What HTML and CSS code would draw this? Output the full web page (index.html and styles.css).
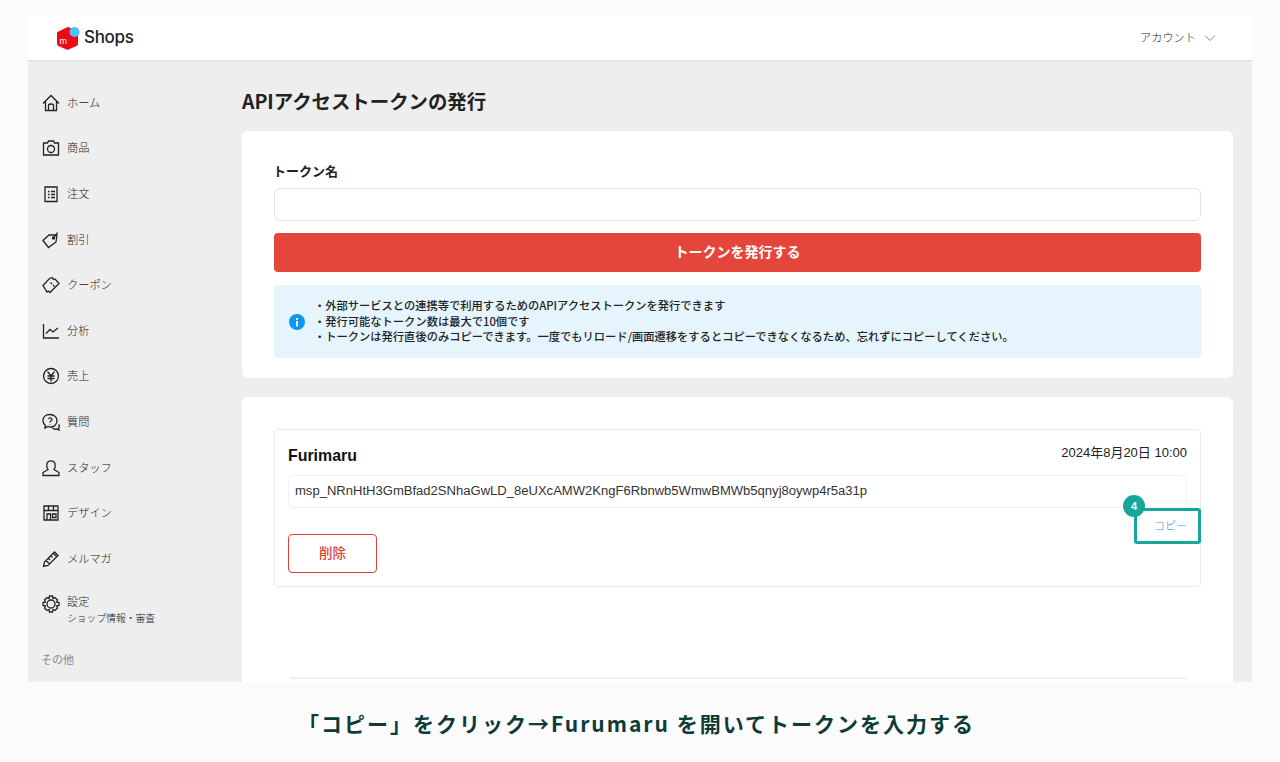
FILE: index.html
```html
<!DOCTYPE html>
<html lang="ja">
<head>
<meta charset="utf-8">
<title>APIアクセストークンの発行</title>
<link rel="stylesheet" href="styles.css">
</head>
<body>
<div class="shot">
  <header class="top">
    <div class="brand">
      <svg class="logo" width="24" height="24" viewBox="0 0 24 24"><path d="M11.500 1 Q12.500 1 13.500 1.500L20.500 4.500Q22 5 22 7V18Q22 19.500 20.500 20L12.500 23.500Q11.500 24 10.500 23.500L2.500 20Q1 19.500 1 18V7.500Q1 6 2.500 5.500Z" fill="#ee0a17"/><path d="M2 6 10 10 10 23" fill="none" stroke="#d40712" stroke-width=".6"/><circle cx="18.500" cy="6" r="5" fill="#4fc0f7"/><text x="3.500" y="17.500" class="logo-m">m</text></svg>
      <span class="brand-name">Shops</span>
    </div>
    <div class="account"><span class="account-label">アカウント</span>
      <svg width="12" height="8" viewBox="0 0 12 8"><path d="M1 1.500 6 6.500 11 1.500" fill="none" stroke="#888" stroke-width="1"/></svg>
    </div>
  </header>
  <div class="body">
    <nav class="side">
      <a class="item"><svg class="ico" viewBox="0 0 18 18"><path d="M1 9.500 9 1.500 17 9.500M3.500 7.500V16.500H14.500V7.500M6.500 16.500V11.500Q6.500 10 9 10 11.500 10 11.500 11.500V16.500"/></svg><span>ホーム</span></a>
      <a class="item"><svg class="ico" viewBox="0 0 18 18"><path d="M1.500 4H5.500L6.500 2H11.500L12.500 4H16.500V16H1.500Z"/><circle cx="9" cy="10" r="3.500"/></svg><span>商品</span></a>
      <a class="item"><svg class="ico" viewBox="0 0 18 18"><path d="M3 2H15V16.500H3ZM6 6.500H7.500M9 6.500H13M6 9.500H7.500M9 9.500H13M6 12.500H7.500M9 12.500H13"/></svg><span>注文</span></a>
      <a class="item"><svg class="ico" viewBox="0 0 18 18"><path d="M1 9.500 7 4H15L14 11 6.500 16.500Z"/><circle cx="11.500" cy="7" r="1" fill="#222"/><path d="M12 6.500 15.500 1.500"/></svg><span>割引</span></a>
      <a class="item"><svg class="ico" viewBox="0 0 18 18"><path d="M1 9.500 7.500 2.500 10 1.500 11.500 3.500 13 3 17 7.500 15.500 9 14 10.500 8 16.500 6.500 15 5 16ZM8.500 6.500 10 8M11 9 12.500 10.500"/></svg><span>クーポン</span></a>
      <a class="item"><svg class="ico" viewBox="0 0 18 18"><path d="M1.500 2V16H17M4 11.500 8 7.500 11 10 16 6"/></svg><span>分析</span></a>
      <a class="item"><svg class="ico" viewBox="0 0 18 18"><circle cx="9" cy="9" r="7.500"/><path d="M5.500 4.500 9 9 12.500 4.500M5.500 9H12.500M5.500 11.500H12.500M9 9V14.500"/></svg><span>売上</span></a>
      <a class="item"><svg class="ico" viewBox="0 0 18 18"><path d="M8 1.500C3.500 1.500 1 4 1 7.500 1 10 2 11.500 3.500 12.500L3 15 6 13.500C7 14 8 14 9 14 12 14 15 11.500 15 7.500 15 4 12 1.500 8 1.500Z"/><path d="M10 14.500C11 16 13 16.500 15 16L17 17 16.500 15C17.500 14 17.500 12.500 16.500 11.500"/><path d="M6.500 6C7 4.500 10 4.500 10 6.500 10 8 8 7.500 8 9.500M8 11V11.500"/></svg><span>質問</span></a>
      <a class="item"><svg class="ico" viewBox="0 0 18 18"><path d="M1 16.500V13.500L6 10.500C4.500 8.500 4.500 6.500 5 4.500 6 1 12 1 13 4.500 13.500 6.500 13.500 8.500 12 10.500L17 13.500V16.500Z"/></svg><span>スタッフ</span></a>
      <a class="item"><svg class="ico" viewBox="0 0 18 18"><path d="M2 2H16V16H2ZM2 6.500H16M6.500 2V6.500M11.500 2V6.500M5 16V10H8.500V16M10.500 10H14V13.500H10.500Z"/></svg><span>デザイン</span></a>
      <a class="item"><svg class="ico" viewBox="0 0 18 18"><path d="M1.500 16.500 2.500 12 12.500 2 16 5.500 6 15.500ZM4 10.500 7.500 14M6.500 8.500 8 10M9 6 10.500 7.500M11.500 3.500 15 7"/></svg><span>メルマガ</span></a>
      <a class="item item-multi"><svg class="ico" viewBox="0 0 18 18"><path d="M7.500 1H10.500L11 3.500 13 2.500 15.500 5 14.500 7 17 7.500V10.500L14.500 11 15.500 13 13 15.500 11 14.500 10.500 17H7.500L7 14.500 5 15.500 2.500 13 3.500 11 1 10.500V7.500L3.500 7 2.500 5 5 2.500 7 3.500Z"/><circle cx="9" cy="9" r="4"/></svg><span class="multi"><span>設定</span><small>ショップ情報・審査</small></span></a>
      <div class="other">その他</div>
    </nav>
    <main class="main">
      <h1 class="title">APIアクセストークンの発行</h1>
      <section class="card form-card">
        <label class="label">トークン名</label>
        <div class="input"></div>
        <div class="issue">トークンを発行する</div>
        <div class="info">
          <svg class="info-ico" width="16" height="16" viewBox="0 0 16 16"><circle cx="8" cy="8" r="8" fill="#0d97f0"/><rect x="7" y="7" width="2" height="5.500" fill="#fff"/><rect x="7" y="4" width="2" height="2" fill="#fff"/></svg>
          <ul class="notes">
            <li>・外部サービスとの連携等で利用するためのAPIアクセストークンを発行できます</li>
            <li>・発行可能なトークン数は最大で10個です</li>
            <li>・トークンは発行直後のみコピーできます。一度でもリロード/画面遷移をするとコピーできなくなるため、忘れずにコピーしてください。</li>
          </ul>
        </div>
      </section>
      <section class="card list-card">
        <article class="token">
          <div class="token-head"><span class="token-name">Furimaru</span><span class="token-date">2024年8月20日 10:00</span></div>
          <div class="token-value">msp_NRnHtH3GmBfad2SNhaGwLD_8eUXcAMW2KngF6Rbnwb5WmwBMWb5qnyj8oywp4r5a31p</div>
          <div class="delete">削除</div>
          <div class="copy">コピー</div>
          <div class="badge">4</div>
        </article>
        <div class="token-next"></div>
      </section>
    </main>
  </div>
</div>
<p class="caption">「コピー」をクリック→Furumaru を開いてトークンを入力する</p>
</body>
</html>
```
FILE: styles.css
```css
* { box-sizing: border-box; }
html, body { margin: 0; height: 762px; overflow: hidden; }
body {
  background: #fbfbfb;
  font-family: "Noto Sans CJK JP", "Liberation Sans", sans-serif;
  color: #222;
  padding-top: 16px;
}
.shot {
  margin: 0 28px;
  height: 666px;
  overflow: hidden;
  background: #eeeeee;
  display: flex;
  flex-direction: column;
}
.top {
  height: 45px;
  flex: none;
  background: #fff;
  border-bottom: 1px solid #e2e2e2;
  display: flex;
  align-items: center;
  justify-content: space-between;
  padding: 0 36px 0 28px;
}
.brand { display: flex; align-items: center; gap: 4px; }
.logo-m { font: 400 9px "Liberation Sans", sans-serif; fill: #fff; }
.brand-name { font: 500 17px/20px "Inter", sans-serif; color: #222; letter-spacing: -0.3px; position: relative; top: -1px; }
.account { display: flex; align-items: center; gap: 8px; font-size: 11.200px; color: #222; font-weight: 300; }
.account-label { position: relative; top: -1px; }
.body { display: flex; flex: 1; min-height: 0; }
.side {
  width: 214px;
  flex: none;
  padding: 18px 0 0 14px;
  display: flex;
  flex-direction: column;
}
.item {
  height: 45.600px;
  display: flex;
  align-items: center;
  gap: 7px;
  font-size: 11.200px;
  font-weight: 300;
  color: #222;
  flex: none;
}
.item-multi { height: 40px; margin-top: 11px; align-items: flex-start; padding-top: 1px; }
.ico { width: 18px; height: 18px; flex: none; fill: none; stroke: #222; stroke-width: 1.300; margin-top: 2px; }
.multi { display: flex; flex-direction: column; line-height: 17px; }
.multi small { font-size: 9.800px; line-height: 17px; }
.other { font-size: 11px; color: #888; margin: 19px 0 0 -1px; line-height: 16px; }
.main { width: 991px; flex: none; display: flex; flex-direction: column; }
.title { margin: 26px 0 17px; font-size: 19.400px; line-height: 27px; font-weight: 700; color: #222; }
.card { background: #fff; border-radius: 6px; padding: 32px; flex: none; }
.form-card { height: 247px; padding-top: 31px; padding-bottom: 20px; display: flex; flex-direction: column; }
.form-card > * { flex: none; }
.label { font-size: 13px; font-weight: 700; line-height: 18px; margin-bottom: 8px; margin-left: -1px; }
.input { height: 33px; border: 1px solid #e3e3e3; border-radius: 6px; background: #fff; }
.issue {
  margin-top: 12px;
  height: 39px;
  padding-bottom: 3px;
  background: #e5463c;
  border-radius: 4px;
  color: #fff;
  font-size: 14px;
  font-weight: 700;
  display: flex;
  align-items: center;
  justify-content: center;
}
.info {
  margin-top: 13px;
  height: 73px;
  background: #e5f4fd;
  border-radius: 3px;
  display: flex;
  align-items: center;
  gap: 9px;
  padding-left: 15px;
}
.notes { list-style: none; margin: 0; padding: 0; font-size: 11.270px; font-weight: 500; line-height: 15.700px; color: #222; }
.list-card { margin-top: 19px; flex: 1; }
.token {
  position: relative;
  height: 158px;
  border: 1px solid #ececec;
  border-radius: 4px;
  padding: 13px 13px 0;
}
.token-head { display: flex; justify-content: space-between; align-items: center; height: 24px; }
.token-name { font: 700 15.900px "Liberation Sans", sans-serif; color: #111; position: relative; top: 1px; }
.token-date { font: 400 13px "Liberation Sans", "Noto Sans CJK JP", sans-serif; color: #222; position: relative; top: -4px; }
.token-value {
  margin-top: 8px;
  height: 33px;
  border: 1px solid #f2f2f2;
  border-radius: 4px;
  padding-left: 6px;
  font: 400 13.050px/30px "Liberation Sans", sans-serif;
  color: #333;
  white-space: nowrap;
  overflow: hidden;
}
.delete {
  margin-top: 26px;
  width: 89px;
  height: 39px;
  padding-bottom: 3px;
  border: 1px solid #d9433a;
  border-radius: 4px;
  color: #d9433a;
  font-size: 13.500px;
  font-weight: 500;
  display: flex;
  align-items: center;
  justify-content: center;
}
.copy {
  position: absolute;
  right: -1px;
  top: 78px;
  width: 67px;
  height: 36px;
  border: 3px solid #14a79a;
  border-radius: 3px;
  background: #fff;
  color: #2f9fe0;
  font-size: 11px;
  font-weight: 300;
  display: flex;
  align-items: center;
  justify-content: flex-end;
  padding: 0 11px 2px 0;
}
.badge {
  position: absolute;
  left: 848px;
  top: 65px;
  width: 22px;
  height: 22px;
  border-radius: 50%;
  background: #14a79a;
  color: #fff;
  font: 700 11px/22px "Liberation Sans", sans-serif;
  text-align: center;
}
.token-next { margin: 90px 14px 0 16px; height: 2px; background: #f0f0f0; }
.caption {
  margin: 0;
  height: 80px;
  padding: 2px 7px 0 0;
  display: flex;
  align-items: center;
  justify-content: center;
  font-size: 21px;
  font-weight: 700;
  letter-spacing: 2px;
  color: #0d3b3a;
}
```
